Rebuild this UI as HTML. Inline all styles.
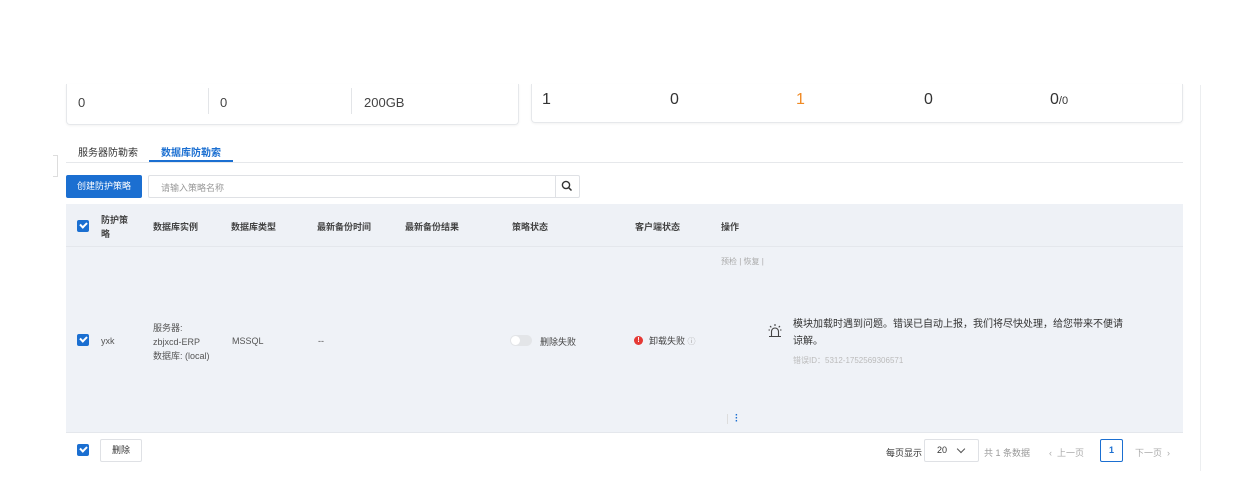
<!DOCTYPE html><html><head><meta charset="utf-8"><style>
*{box-sizing:border-box;margin:0;padding:0}
body{width:1238px;height:492px;background:#fff;font-family:"Liberation Sans","Noto Sans CJK SC",sans-serif;position:relative;overflow:hidden;color:#333;font-size:10px}
.a{position:absolute}
.cb{position:absolute;width:12px;height:12px;background:#1b6fd1;border-radius:2px}
.cb:after{content:"";position:absolute;left:3px;top:2px;width:5px;height:3px;border-left:2px solid #fff;border-bottom:2px solid #fff;transform:rotate(-45deg)}
.h{font-size:9px;color:#444;font-weight:bold}
</style></head><body>
<div class="a" style="left:66px;top:84px;width:453px;height:41px;border:1px solid #e6e8eb;border-top:none;border-radius:0 0 4px 4px;box-shadow:0 1px 2px rgba(0,0,0,.05)"></div>
<div class="a" style="left:208px;top:88px;width:1px;height:26px;background:#e3e5e8"></div>
<div class="a" style="left:351px;top:88px;width:1px;height:26px;background:#e3e5e8"></div>
<div class="a" style="left:78px;top:95px;font-size:13px;color:#444">0</div>
<div class="a" style="left:220px;top:95px;font-size:13px;color:#444">0</div>
<div class="a" style="left:364px;top:95px;font-size:13px;color:#444">200GB</div>
<div class="a" style="left:531px;top:84px;width:652px;height:39px;border:1px solid #e6e8eb;border-top:none;border-radius:0 0 4px 4px;box-shadow:0 1px 2px rgba(0,0,0,.05)"></div>
<div class="a" style="left:542px;top:91px;font-size:16px;color:#333">1</div>
<div class="a" style="left:670px;top:91px;font-size:16px;color:#333">0</div>
<div class="a" style="left:796px;top:91px;font-size:16px;color:#f08a24">1</div>
<div class="a" style="left:924px;top:91px;font-size:16px;color:#333">0</div>
<div class="a" style="left:1050px;top:91px;font-size:16px;color:#333">0<span style="font-size:11px">/0</span></div>
<div class="a" style="left:1200px;top:85px;width:1px;height:386px;background:#eceef0"></div>
<div class="a" style="left:53px;top:155px;width:5px;height:22px;border:1px solid #ddd;border-left:none"></div>
<div class="a" style="left:78px;top:144px;font-size:10px;color:#333">服务器防勒索</div>
<div class="a" style="left:161px;top:144px;font-size:10px;color:#1b6fd1;font-weight:bold">数据库防勒索</div>
<div class="a" style="left:66px;top:162px;width:1117px;height:1px;background:#e6e8eb"></div>
<div class="a" style="left:149px;top:160px;width:84px;height:2px;background:#1b6fd1"></div>
<div class="a" style="left:66px;top:175px;width:76px;height:23px;background:#1b6fd1;border-radius:2px;color:#fff;font-size:9px;line-height:23px;text-align:center">创建防护策略</div>
<div class="a" style="left:148px;top:175px;width:432px;height:23px;border:1px solid #dfe1e5;border-radius:2px"></div>
<div class="a" style="left:555px;top:175px;width:1px;height:23px;background:#dfe1e5"></div>
<div class="a" style="left:161px;top:181px;font-size:9px;color:#999">请输入策略名称</div>
<svg class="a" style="left:561px;top:180px" width="12" height="12" viewBox="0 0 12 12"><circle cx="5" cy="5" r="3.6" fill="none" stroke="#333" stroke-width="1.4"/><path d="M7.7 7.7L10.5 10.5" stroke="#333" stroke-width="1.5"/></svg>
<div class="a" style="left:66px;top:204px;width:1117px;height:42px;background:#eef1f6"></div>
<div class="a" style="left:66px;top:246px;width:1117px;height:1px;background:#e4e7ec"></div>
<div class="a" style="left:66px;top:247px;width:1117px;height:185px;background:#eff2f7"></div>
<div class="a" style="left:66px;top:432px;width:1117px;height:1px;background:#e4e7ec"></div>
<div class="cb" style="left:77px;top:220px"></div>
<div class="a h" style="left:101px;top:213px;line-height:14px">防护策<br>略</div>
<div class="a h" style="left:153px;top:220px">数据库实例</div>
<div class="a h" style="left:231px;top:220px">数据库类型</div>
<div class="a h" style="left:317px;top:220px">最新备份时间</div>
<div class="a h" style="left:405px;top:220px">最新备份结果</div>
<div class="a h" style="left:512px;top:220px">策略状态</div>
<div class="a h" style="left:635px;top:220px">客户端状态</div>
<div class="a h" style="left:721px;top:220px">操作</div>
<div class="a" style="left:721px;top:256px;font-size:8px;color:#aaa">预检 | 恢复 |</div>
<div class="cb" style="left:77px;top:334px"></div>
<div class="a" style="left:101px;top:336px;font-size:9px;color:#555">yxk</div>
<div class="a" style="left:153px;top:321px;font-size:9px;color:#555;line-height:14px">服务器:<br>zbjxcd-ERP<br>数据库: (local)</div>
<div class="a" style="left:232px;top:336px;font-size:9px;color:#555">MSSQL</div>
<div class="a" style="left:318px;top:336px;font-size:9px;color:#555">--</div>
<div class="a" style="left:510px;top:335px;width:22px;height:11px;border-radius:6px;background:#e3e5e8"><div style="width:9px;height:9px;margin:1px;border-radius:50%;background:#fff"></div></div>
<div class="a" style="left:540px;top:335px;font-size:9px;color:#444">删除失败</div>
<div class="a" style="left:634px;top:336px;width:9px;height:9px;border-radius:50%;background:#e53935;color:#fff;font-size:7px;line-height:9px;text-align:center;font-weight:bold">!</div>
<div class="a" style="left:649px;top:334px;font-size:9px;color:#444">卸载失败 <span style="color:#aaa;font-size:8px">ⓘ</span></div>
<svg class="a" style="left:767px;top:323px" width="16" height="16" viewBox="0 0 16 16" fill="none" stroke="#444" stroke-width="1.1"><path d="M4.5 13V8.5a3.5 3.5 0 0 1 7 0V13M2 13.5h12M8 1v2M3 3l1.3 1.3M13 3l-1.3 1.3M1.5 7h1.5M13 7h1.5"/></svg>
<div class="a" style="left:793px;top:316px;font-size:10px;color:#333;line-height:17px;width:360px">模块加载时遇到问题。错误已自动上报，我们将尽快处理，给您带来不便请<br>谅解。</div>
<div class="a" style="left:793px;top:355px;font-size:8px;color:#bbb">错误ID：5312-1752569306571</div>
<div class="a" style="left:727px;top:414px;width:1px;height:10px;background:#ddd"></div>
<div class="a" style="left:735px;top:414px;font-size:10px;color:#1b6fd1;font-weight:bold;line-height:3px">·<br>·<br>·</div>
<div class="cb" style="left:77px;top:444px"></div>
<div class="a" style="left:100px;top:439px;width:42px;height:23px;border:1px solid #dfe1e5;border-radius:2px;font-size:9px;line-height:21px;text-align:center;color:#333">删除</div>
<div class="a" style="left:886px;top:446px;font-size:9px;color:#333">每页显示</div>
<div class="a" style="left:924px;top:439px;width:55px;height:23px;border:1px solid #dfe1e5;border-radius:2px;font-size:9px;line-height:21px;padding-left:12px;color:#333">20 <span style="position:absolute;left:33px;top:6px;width:6px;height:6px;border-right:1.3px solid #555;border-bottom:1.3px solid #555;transform:rotate(45deg)"></span></div>
<div class="a" style="left:984px;top:446px;font-size:9px;color:#999">共 1 条数据</div>
<div class="a" style="left:1049px;top:446px;font-size:9px;color:#aaa">‹&nbsp; 上一页</div>
<div class="a" style="left:1100px;top:439px;width:23px;height:23px;border:1px solid #1b6fd1;border-radius:2px;font-size:9px;line-height:21px;text-align:center;color:#1b6fd1;font-weight:bold">1</div>
<div class="a" style="left:1135px;top:446px;font-size:9px;color:#aaa">下一页 &nbsp;›</div>
</body></html>
